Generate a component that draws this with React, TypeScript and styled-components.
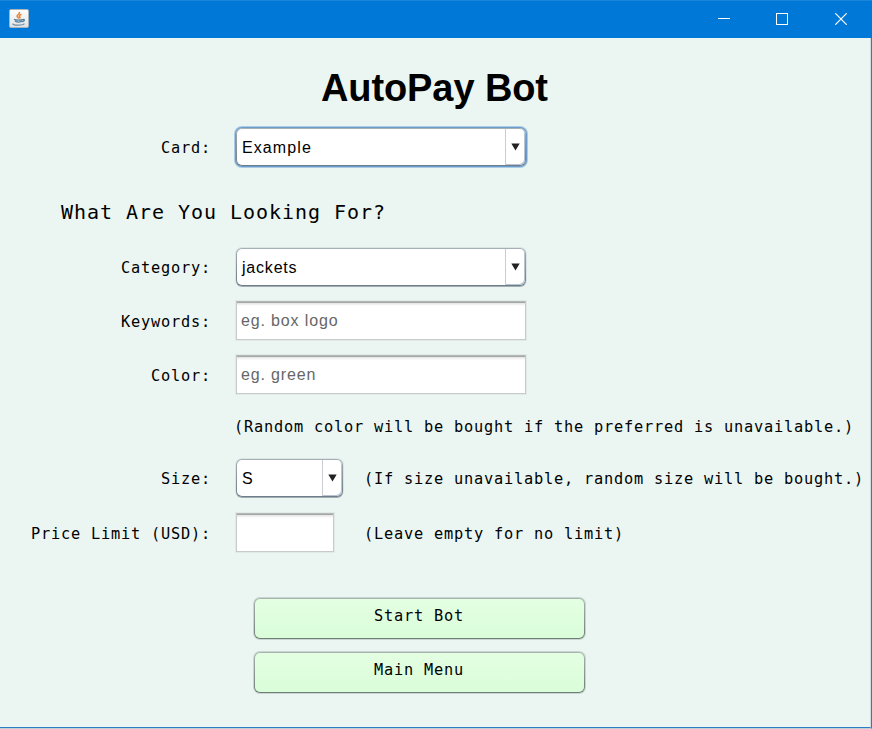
import React from "react";
import styled, { createGlobalStyle, css } from "styled-components";

const GlobalStyle = createGlobalStyle`
  * { box-sizing: border-box; }
  body { margin: 0; overflow: hidden; }
`;

const mono = css`
  font-family: "DejaVu Sans Mono", monospace;
  font-size: 15.3px;
  letter-spacing: 0.79px;
  line-height: 20px;
  white-space: pre;
  color: #000;
`;

const sans = css`
  font-family: "Liberation Sans", Arial, sans-serif;
  font-size: 16px;
  letter-spacing: 1px;
`;

const Window = styled.div`
  width: 872px;
  height: 729px;
  display: flex;
  flex-direction: column;
  background: #ebf5f2;
  border-right: 1px solid #2a7cc4;
  border-bottom: 1px solid #c3cfd6;
`;

const TitleBar = styled.header`
  height: 38px;
  flex: none;
  display: flex;
  align-items: center;
  justify-content: space-between;
  padding: 0 0 2px 9px;
  margin-right: -1px;
  background: #0078d7;
  border-top: 1px solid #1a86db;
`;

const WindowControls = styled.div`
  display: flex;
  height: 100%;
  margin-right: 2px;
`;

const ControlButton = styled.button`
  width: 58.5px;
  height: 100%;
  padding: 0;
  border: 0;
  background: transparent;
  display: flex;
  align-items: center;
  justify-content: center;
`;

const Body = styled.main`
  flex: 1;
  display: flex;
  flex-direction: column;
  border-right: 1px solid #ccdbe4;
  border-bottom: 1px solid #2a7cc4;
`;

const Title = styled.h1`
  margin: 0;
  height: 82px;
  padding: 26px 0 0 321px;
  font: bold 38px/48px "Liberation Sans", Arial, sans-serif;
  letter-spacing: -0.1px;
  color: #000;
`;

const Subtitle = styled.h2`
  ${mono}
  margin: 0;
  height: 66px;
  padding: 24px 0 0 61px;
  font-weight: normal;
  font-size: 20px;
  line-height: 28px;
  letter-spacing: 0.96px;
`;

const Row = styled.div<{ $height?: number }>`
  height: ${(p) => p.$height ?? 54}px;
  flex: none;
  display: flex;
  align-items: center;
`;

const Label = styled.label`
  ${mono}
  width: 211px;
  margin-right: 25px;
  padding-top: 1px;
  text-align: right;
`;

const Note = styled.span<{ $left?: number }>`
  ${mono}
  margin-left: ${(p) => p.$left ?? 0}px;
  padding-top: 1px;
`;

const Combo = styled.div<{ $width: number; $focused?: boolean }>`
  ${sans}
  width: ${(p) => p.$width}px;
  height: 38px;
  display: flex;
  border: 1px solid transparent;
  border-radius: 6px;
  color: #000;
  background: linear-gradient(#fff, #fff) padding-box,
    linear-gradient(#a5b0b7, #6c7c88) border-box;
  box-shadow: ${(p) =>
    p.$focused
      ? "0 0 0 1px #6b9ccb, 0 0 0 2px #a9cbe5"
      : "0 1px 0 rgba(90, 105, 115, 0.45), 0 0 0 1px rgba(120, 140, 150, 0.15)"};
`;

const ComboValue = styled.span<{ $tight?: boolean }>`
  flex: 1;
  padding-left: 5px;
  line-height: 37px;
  letter-spacing: ${(p) => (p.$tight ? 0.8 : 1.1)}px;
`;

const ComboArrow = styled.span`
  width: 20px;
  display: flex;
  align-items: center;
  justify-content: center;
  padding-bottom: 1px;
  border-left: 1px solid #c9cdd2;
  box-shadow: inset -1px -1px 0 #b9c6d2;
  border-radius: 0 5px 5px 0;
`;

const TextField = styled.input<{ $width: number }>`
  ${sans}
  letter-spacing: 0.85px;
  width: ${(p) => p.$width}px;
  height: 39px;
  margin-top: -1px;
  padding: 0 4px;
  border: 1px solid;
  border-color: #b4b8b7 #c8cbcb #c8cbcb;
  border-radius: 0;
  outline: 0;
  background: linear-gradient(#a6a8a8, #a6a8a8 1px, #e3e3e3 1px, #fff 4px);
  box-shadow: 0 0 0 1px rgba(150, 155, 155, 0.12);
  &::placeholder {
    color: #666;
    opacity: 1;
  }
`;

const Actions = styled.div`
  display: flex;
  flex-direction: column;
  gap: 13px;
  padding: 38px 0 0 254px;
`;

const ActionButton = styled.button`
  ${mono}
  width: 331px;
  height: 41px;
  padding: 0 1px 6px 0;
  border: 1px solid transparent;
  border-radius: 6px;
  background: linear-gradient(#e4ffe2, #dafdd9) padding-box,
    linear-gradient(#a8b5ae, #6f7f76) border-box;
  box-shadow: 0 0 0 1px rgba(100, 120, 110, 0.25);
`;

const JavaIcon = () => (
  <svg width="20" height="19" viewBox="0 0 20 19">
    <defs>
      <linearGradient id="tile" x1="0" y1="0" x2="0" y2="1">
        <stop offset="0" stopColor="#fff" />
        <stop offset="1" stopColor="#dfe2e4" />
      </linearGradient>
    </defs>
    <rect x="0.5" y="0.5" width="19" height="18" rx="1.5" fill="url(#tile)" stroke="#a9b5bd" />
    <g fill="none" strokeLinecap="round">
      <path d="M10.400 3.500c.6 1.700-3.200 2.400-2.300 3.900.3.700 1.200.8 1.400 1.600M12 5.500c-1.900.8-2.300 1.500-1.200 2.300.4.500.2.800-.2 1.100" stroke="#e8863d" strokeWidth="1.500" />
      <path d="M5.500 10.600c1.500.7 6.500.6 8 0M6.500 12.400c1.500.7 4.500.7 6 0M14 10.600c2-.6 1.700 1.600-.4 2" stroke="#55809f" strokeWidth="1.400" />
      <path d="M4 15c-.7 1.500 10 1.500 11 0" stroke="#6e8ca3" strokeWidth="1.300" />
    </g>
  </svg>
);

const Arrow = () => (
  <svg width="9" height="8" viewBox="0 0 9 8">
    <path d="M0.300 0.500h8.400L4.500 7.500z" fill="#222" />
  </svg>
);

interface ComboBoxProps {
  value: string;
  width: number;
  focused?: boolean;
  tight?: boolean;
}

function ComboBox({ value, width, focused, tight }: ComboBoxProps) {
  return (
    <Combo $width={width} $focused={focused}>
      <ComboValue $tight={tight}>{value}</ComboValue>
      <ComboArrow>
        <Arrow />
      </ComboArrow>
    </Combo>
  );
}

export default function App() {
  return (
    <>
      <GlobalStyle />
      <Window>
        <TitleBar>
          <JavaIcon />
          <WindowControls>
            <ControlButton aria-label="Minimize">
              <svg width="12" height="12" shapeRendering="crispEdges">
                <path d="M0 5.500h12" stroke="#fff" />
              </svg>
            </ControlButton>
            <ControlButton aria-label="Maximize">
              <svg width="12" height="12" shapeRendering="crispEdges">
                <rect x="0.5" y="0.5" width="11" height="11" fill="none" stroke="#fff" />
              </svg>
            </ControlButton>
            <ControlButton aria-label="Close">
              <svg width="12" height="12">
                <path d="M0.300 0.300l11.400 11.400M11.700 0.300L0.300 11.700" stroke="#fff" strokeWidth="1.200" />
              </svg>
            </ControlButton>
          </WindowControls>
        </TitleBar>
        <Body>
          <Title>AutoPay Bot</Title>
          <Row>
            <Label>Card:</Label>
            <ComboBox value="Example" width={290} focused />
          </Row>
          <Subtitle>What Are You Looking For?</Subtitle>
          <Row>
            <Label>Category:</Label>
            <ComboBox value="jackets" width={290} tight />
          </Row>
          <Row>
            <Label>Keywords:</Label>
            <TextField $width={290} placeholder="eg. box logo" />
          </Row>
          <Row>
            <Label>Color:</Label>
            <TextField $width={290} placeholder="eg. green" />
          </Row>
          <Row $height={48}>
            <Note $left={234}>(Random color will be bought if the preferred is unavailable.)</Note>
          </Row>
          <Row $height={56}>
            <Label>Size:</Label>
            <ComboBox value="S" width={107} />
            <Note $left={21}>(If size unavailable, random size will be bought.)</Note>
          </Row>
          <Row>
            <Label>Price Limit (USD):</Label>
            <TextField $width={98} aria-label="Price limit" />
            <Note $left={30}>(Leave empty for no limit)</Note>
          </Row>
          <Actions>
            <ActionButton>Start Bot</ActionButton>
            <ActionButton>Main Menu</ActionButton>
          </Actions>
        </Body>
      </Window>
    </>
  );
}
